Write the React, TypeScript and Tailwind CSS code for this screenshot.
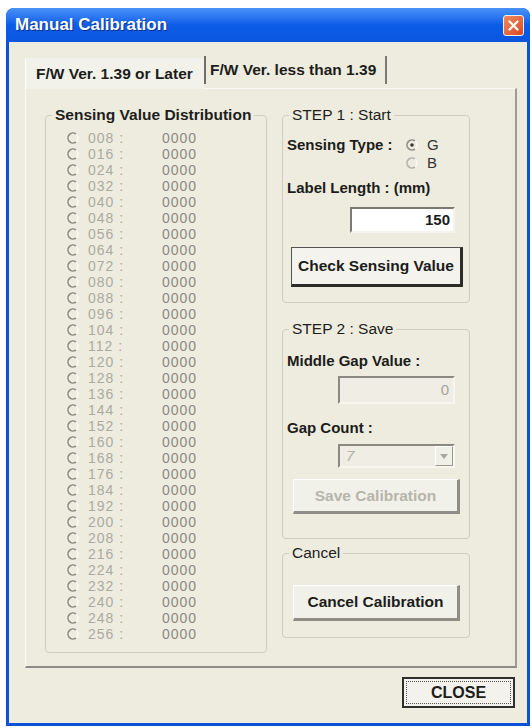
import React from "react";

const rows = Array.from({ length: 32 }, (_, i) => String((i + 1) * 8).padStart(3, "0"));

function ArcRadio({ checked = false, dim = false }: { checked?: boolean; dim?: boolean }) {
  const stroke = dim ? "#b2b1a8" : "#8f8e86";
  return (
    <svg width="12" height="12" viewBox="0 0 12 12" className="shrink-0">
      <path d="M9 2 A5 5 0 1 0 9 10" fill="none" stroke={stroke} strokeWidth="1.6" />
      <path d="M9 2 A5 5 0 0 1 9 10" fill="none" stroke="#fbfaf5" strokeWidth="1.2" />
      {checked && <circle cx="6" cy="6" r="1.8" fill="#3a3a36" />}
    </svg>
  );
}

function GroupBox({
  title,
  bold = false,
  className = "",
  children,
}: {
  title: string;
  bold?: boolean;
  className?: string;
  children: React.ReactNode;
}) {
  return (
    <fieldset className={`border border-[#cfcdc0] rounded-[4px] ${className}`}>
      <legend
        className={`ml-[6px] px-[3px] text-[15.5px] leading-[16px] text-[#1e1e1c] ${
          bold ? "font-bold" : "font-normal"
        }`}
      >
        {title}
      </legend>
      {children}
    </fieldset>
  );
}

export default function App() {
  return (
    <div
      className="w-[532px] h-[728px] bg-white pt-[8px] pl-[6px]"
      style={{ fontFamily: '"Liberation Sans", Arial, sans-serif' }}
    >
      <div className="w-[524px] h-[718px] flex flex-col rounded-t-[8px] bg-[#0b52d9]">
        {/* title bar */}
        <div className="h-[34px] flex items-center justify-between pl-[9px] pr-[6px] rounded-t-[8px] bg-gradient-to-b from-[#4a91f7] via-[#0c5ce9] to-[#0a55de]">
          <span className="text-white font-bold text-[17px] [text-shadow:1px_1px_#0b2f8a]">
            Manual Calibration
          </span>
          <div className="w-[21px] h-[21px] rounded-[3px] border border-[#f2f2f2] bg-gradient-to-br from-[#ef8a5e] to-[#d9481f] flex items-center justify-center">
            <svg width="13" height="13" viewBox="0 0 13 13">
              <path d="M2.5 2.5 L10.5 10.5 M10.5 2.5 L2.5 10.5" stroke="white" strokeWidth="2.2" strokeLinecap="round" />
            </svg>
          </div>
        </div>

        {/* client area */}
        <div className="flex-1 mx-[3px] mb-[3px] bg-[#eeecdf] pt-[15px] pl-[16px]">
          {/* tabs */}
          <div className="flex items-end h-[31px]">
            <div className="w-[179px] h-[31px] bg-[#f3f2ea] border-l border-white flex items-center pl-[10px] text-[15.5px] font-bold text-[#1c1c1a] relative z-10 -mb-px">
              F/W Ver. 1.39 or Later
            </div>
            <div className="h-[28px] w-[183px] border-l-2 border-l-[#6e6d67] border-r-2 border-r-[#7a7972] flex items-center pl-[4px] text-[15.5px] font-bold text-[#1c1c1a] mb-[4px]">
              F/W Ver. less than 1.39
            </div>
          </div>

          {/* tab panel */}
          <div className="w-[492px] border-t border-l border-t-[#fbfaf4] border-l-[#fbfaf4] border-r-2 border-b-2 border-r-[#9c9b94] border-b-[#8d8c86] bg-[#eeecdf] pt-[18px] pl-[19px] pb-[13px] flex items-start gap-[15px]">
            {/* left list */}
            <GroupBox title="Sensing Value Distribution" bold className="w-[222px] pt-[7px] pb-[10px]">
              {rows.map((v) => (
                <div key={v} className="h-[16px] flex items-center">
                  <div className="ml-[21px] mr-[9px]">
                    <ArcRadio />
                  </div>
                  <span className="w-[74px] text-[14px] tracking-[1px] text-[#abaaa1] leading-none">{v} :</span>
                  <span className="text-[14px] tracking-[1px] text-[#8b8a82] leading-none">0000</span>
                </div>
              ))}
            </GroupBox>

            {/* right column */}
            <div className="w-[188px] flex flex-col">
              <GroupBox title="STEP 1 : Start" className="pt-[13px] pb-[15px]">
                <div className="h-[18px] flex items-center pl-[4px]">
                  <span className="w-[119px] text-[15px] font-bold text-[#1c1c1a]">Sensing Type :</span>
                  <ArcRadio checked />
                  <span className="ml-[9px] text-[15px] text-[#333330]">G</span>
                </div>
                <div className="h-[18px] flex items-center pl-[4px]">
                  <span className="w-[119px]" />
                  <ArcRadio dim />
                  <span className="ml-[9px] text-[15px] text-[#333330]">B</span>
                </div>
                <div className="h-[18px] mt-[7px] flex items-center pl-[4px] text-[15px] font-bold text-[#1c1c1a]">
                  Label Length : (mm)
                </div>
                <div className="mt-[10px] ml-[67px] w-[105px] h-[26px] bg-white border-2 border-t-[#7a7a72] border-l-[#7a7a72] border-r-[#f4f3ee] border-b-[#f4f3ee] flex items-center justify-end pr-[3px] text-[15px] font-bold text-[#1c1c1a]">
                  150
                </div>
                <div className="mt-[14px] ml-[8px] w-[172px] h-[40px] bg-[#f4f3ed] border border-[#55554f] border-r-[3px] border-b-[3px] border-r-[#2c2c29] border-b-[#2c2c29] flex items-center justify-center text-[15.5px] font-bold text-[#1c1c1a]">
                  Check Sensing Value
                </div>
              </GroupBox>

              <GroupBox title="STEP 2 : Save" className="mt-[18px] pt-[15px] pb-[24px]">
                <div className="h-[18px] flex items-center pl-[4px] text-[15px] font-bold text-[#1c1c1a]">
                  Middle Gap Value :
                </div>
                <div className="mt-[6px] ml-[55px] w-[117px] h-[28px] bg-[#efede4] border-2 border-t-[#8a8982] border-l-[#8a8982] border-r-[#f7f6f1] border-b-[#f7f6f1] flex items-center justify-end pr-[4px] text-[15px] text-[#a5a49b]">
                  0
                </div>
                <div className="mt-[15px] h-[18px] flex items-center pl-[4px] text-[15px] font-bold text-[#1c1c1a]">
                  Gap Count :
                </div>
                <div className="mt-[7px] ml-[55px] w-[117px] h-[24px] bg-[#efede4] border-2 border-t-[#8a8982] border-l-[#8a8982] border-r-[#f7f6f1] border-b-[#f7f6f1] flex items-center">
                  <span className="flex-1 pl-[6px] text-[15px] italic text-[#b1b0a7]">7</span>
                  <div className="w-[18px] h-full bg-[#f1f0e8] border border-t-white border-l-white border-r-[#9a9991] border-b-[#9a9991] flex items-center justify-center">
                    <svg width="8" height="5" viewBox="0 0 8 5">
                      <path d="M0 0 H8 L4 5 Z" fill="#a8a79f" />
                    </svg>
                  </div>
                </div>
                <div className="mt-[11px] ml-[10px] w-[167px] h-[35px] bg-[#f1f0e9] border border-t-white border-l-white border-r-[3px] border-b-[3px] border-r-[#8e8d86] border-b-[#8e8d86] flex items-center justify-center text-[15.5px] font-bold text-[#b6b5ab]">
                  Save Calibration
                </div>
              </GroupBox>

              <GroupBox title="Cancel" className="mt-[6px] pt-[24px] pb-[16px]">
                <div className="ml-[10px] w-[167px] h-[36px] bg-[#f1f0e9] border border-t-white border-l-white border-r-[3px] border-b-[3px] border-r-[#8e8d86] border-b-[#8e8d86] flex items-center justify-center text-[15.5px] font-bold text-[#1c1c1a]">
                  Cancel Calibration
                </div>
              </GroupBox>
            </div>
          </div>

          {/* close */}
          <div className="flex justify-end pr-[12px] mt-[9px]">
            <div className="w-[113px] h-[31px] bg-[#f3f2ec] border-2 border-[#2f2f2c] p-[2px]">
              <div className="w-full h-full border border-dotted border-[#55554f] flex items-center justify-center text-[16px] font-bold text-[#1c1c1a]">
                CLOSE
              </div>
            </div>
          </div>
        </div>
      </div>
    </div>
  );
}
